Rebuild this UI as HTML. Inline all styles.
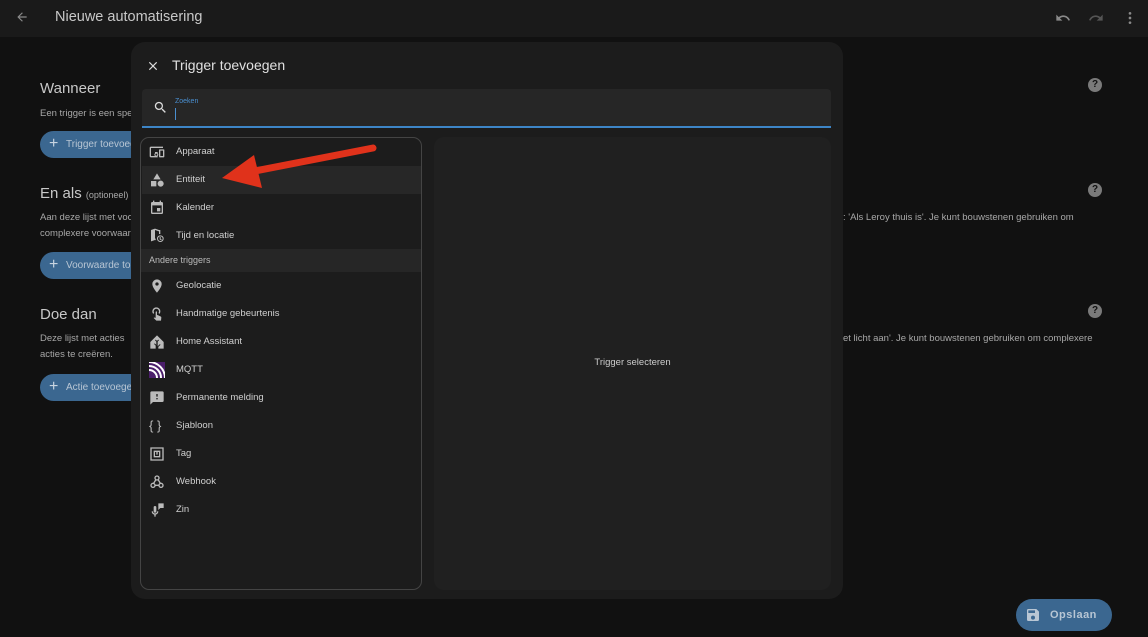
<!DOCTYPE html>
<html><head><meta charset="utf-8"><style>
*{box-sizing:border-box;margin:0;padding:0}
body{width:1148px;height:637px;background:#111;font-family:"Liberation Sans",sans-serif;color:#ddd;position:relative;overflow:hidden}
.a{position:absolute;white-space:nowrap}
.hdr{position:absolute;left:0;top:0;width:1148px;height:37px;background:#1a1a1a}
h2{position:absolute;font-weight:normal;font-size:15px;color:#c8c8c8;white-space:nowrap}
.p{position:absolute;font-size:9.5px;color:#a8a8a8;line-height:16px;white-space:nowrap}
.btn{position:absolute;left:40px;height:27px;width:120px;border-radius:14px;background:#3b6790;color:#b8c6d4;font-size:10px;line-height:27px;padding-left:26px;white-space:nowrap;overflow:hidden}
.btn:before{content:"+";position:absolute;left:9px;top:-1px;font-size:16px;color:#c8d4e0}
.q{position:absolute;left:1088px;width:14px;height:14px;border-radius:50%;background:#7a7a7a;color:#111;font-size:10px;font-weight:bold;text-align:center;line-height:14px}
.dlg{position:absolute;left:131px;top:42px;width:712px;height:557px;background:#1c1c1c;border-radius:14px}
.it{position:absolute;left:1px;width:279px;height:28px;font-size:9.5px;color:#d0d0d0;line-height:28px;padding-left:34px}
.ic{position:absolute;left:7px;top:6px;width:16px;height:16px}
</style></head><body>
<div class="hdr"></div>
<svg class="a" style="left:15px;top:10px" width="14" height="14" viewBox="0 0 24 24"><path d="M20 11H7.8l5.6-5.6L12 4l-8 8 8 8 1.4-1.4L7.8 13H20z" fill="#8a8a8a"/></svg>
<div class="a" style="left:55px;top:9px;font-size:14.5px;color:#c8c8c8">Nieuwe automatisering</div>
<svg class="a" style="left:1055px;top:10px" width="16" height="16" viewBox="0 0 24 24"><path d="M12.5 8c-2.6 0-5 1-6.9 2.6L2 7v9h9l-3.6-3.6c1.4-1.2 3.2-1.9 5.1-1.9 3.5 0 6.5 2.3 7.6 5.5l2.4-.8C21 11 17.1 8 12.5 8z" fill="#8a8a8a"/></svg>
<svg class="a" style="left:1088px;top:10px" width="16" height="16" viewBox="0 0 24 24"><path d="M18.4 10.6C16.6 9 14.1 8 11.5 8 6.9 8 3 11 1.6 15.2l2.4.8C5 12.8 8 10.5 11.5 10.5c1.9 0 3.7.7 5.1 1.9L13 16h9V7z" fill="#555"/></svg>
<svg class="a" style="left:1122px;top:10px" width="16" height="16" viewBox="0 0 24 24"><circle cx="12" cy="5" r="2" fill="#8a8a8a"/><circle cx="12" cy="12" r="2" fill="#8a8a8a"/><circle cx="12" cy="19" r="2" fill="#8a8a8a"/></svg>

<h2 style="left:40px;top:80px">Wanneer</h2>
<div class="p" style="left:40px;top:106px">Een trigger is een spe</div>
<div class="btn" style="top:131px">Trigger toevoegen</div>
<h2 style="left:40px;top:185px">En als <span style="font-size:9px;color:#aaa">(optioneel)</span></h2>
<div class="p" style="left:40px;top:210px">Aan deze lijst met voorwaarden<br>complexere voorwaarden</div>
<div class="p" style="left:843px;top:210px">: 'Als Leroy thuis is'. Je kunt bouwstenen gebruiken om</div>
<div class="btn" style="top:252px">Voorwaarde toevoegen</div>
<h2 style="left:40px;top:306px">Doe dan</h2>
<div class="p" style="left:40px;top:331px">Deze lijst met acties<br>acties te creëren.</div>
<div class="p" style="left:843px;top:331px">et licht aan'. Je kunt bouwstenen gebruiken om complexere</div>
<div class="btn" style="top:374px">Actie toevoegen</div>
<div class="q" style="top:78px">?</div><div class="q" style="top:183px">?</div><div class="q" style="top:304px">?</div>

<div class="a" style="left:1016px;top:599px;width:96px;height:32px;border-radius:16px;background:#3b6790;color:#b8c6d4;font-size:11px;font-weight:bold;line-height:32px;padding-left:34px;letter-spacing:.5px">Opslaan</div>
<svg class="a" style="left:1025px;top:607px" width="16" height="16" viewBox="0 0 24 24"><path d="M17 3H5a2 2 0 0 0-2 2v14a2 2 0 0 0 2 2h14a2 2 0 0 0 2-2V7zm-5 16a3 3 0 1 1 0-6 3 3 0 0 1 0 6zm3-10H5V5h10z" fill="#b8c6d4"/></svg>

<div class="dlg">
 <svg class="a" style="left:15px;top:17px" width="14" height="14" viewBox="0 0 24 24"><path d="M19 6.4 17.6 5 12 10.6 6.4 5 5 6.4 10.6 12 5 17.6 6.4 19 12 13.4 17.6 19 19 17.6 13.4 12z" fill="#ddd"/></svg>
 <div class="a" style="left:41px;top:15px;font-size:14px;color:#e0e0e0">Trigger toevoegen</div>
 <div class="a" style="left:11px;top:47px;width:689px;height:39px;background:#262626;border-radius:4px 4px 0 0;border-bottom:2px solid #3d85c6"></div>
 <svg class="a" style="left:22px;top:58px" width="15" height="15" viewBox="0 0 24 24"><path d="M15.5 14h-.8l-.3-.3A6.5 6.5 0 1 0 9.5 16a6.5 6.5 0 0 0 4.2-1.6l.3.3v.8l5 5 1.5-1.5zm-6 0a4.5 4.5 0 1 1 0-9 4.5 4.5 0 0 1 0 9z" fill="#ddd"/></svg>
 <div class="a" style="left:44px;top:56px;font-size:7px;color:#4a8fd0">Zoeken</div>
 <div class="a" style="left:44px;top:66px;width:1px;height:12px;background:#4a8fd0"></div>
 <div class="a" style="left:303px;top:95px;width:397px;height:453px;background:#202020;border-radius:10px"></div>
 <div class="a" style="left:303px;top:315px;width:397px;text-align:center;font-size:9.5px;color:#ccc">Trigger selecteren</div>
 <div class="a" style="left:9px;top:95px;width:282px;height:453px;border:1px solid #444;border-radius:9px;overflow:hidden">
  <div class="it" style="top:0"><svg class="ic" viewBox="0 0 24 24"><path d="M3 6h18V4H3a2 2 0 0 0-2 2v12a2 2 0 0 0 2 2h6v-2H3zm10 6H9v1.8a3 3 0 0 0 0 4.4V20h4v-1.8a3 3 0 0 0 0-4.4zm-2 5.5a1.5 1.5 0 1 1 0-3 1.5 1.5 0 0 1 0 3zM22 8h-6a1 1 0 0 0-1 1v10a1 1 0 0 0 1 1h6a1 1 0 0 0 1-1V9a1 1 0 0 0-1-1zm-1 10h-4v-8h4z" fill="#bbb"/></svg>Apparaat</div>
  <div class="it" style="top:28px;background:#272727"><svg class="ic" viewBox="0 0 24 24"><path d="M11 13.5v8H3v-8zM12 2l5.5 9h-11zm5.5 11c2.5 0 4.5 2 4.5 4.5S20 22 17.5 22 13 20 13 17.5s2-4.5 4.5-4.5z" fill="#bbb"/></svg>Entiteit</div>
  <div class="it" style="top:56px"><svg class="ic" viewBox="0 0 24 24"><path d="M19 19H5V8h14m-3-7v2H8V1H6v2H5a2 2 0 0 0-2 2v14a2 2 0 0 0 2 2h14a2 2 0 0 0 2-2V5a2 2 0 0 0-2-2h-1V1m-1 11h-5v5h5z" fill="#bbb"/></svg>Kalender</div>
  <div class="it" style="top:84px"><svg class="ic" viewBox="0 0 24 24"><path d="M15 3 9 1 3 3v17l6-2 1 .3V16l-1-.3V3l6 2v4h2V3zm2 8a5 5 0 1 0 0 10 5 5 0 0 0 0-10zm0 8.5a3.5 3.5 0 1 1 0-7 3.5 3.5 0 0 1 0 7zm.5-6H16V17l2.5 1.5.7-1.1-1.7-1z" fill="#bbb"/></svg>Tijd en locatie</div>
  <div class="a" style="left:0;top:111px;width:281px;height:23px;background:#262626;font-size:9px;color:#bbb;line-height:23px;padding-left:8px">Andere triggers</div>
  <div class="it" style="top:134px"><svg class="ic" viewBox="0 0 24 24"><path d="M12 11.5A2.5 2.5 0 1 1 12 6.5a2.5 2.5 0 0 1 0 5M12 2a7 7 0 0 0-7 7c0 5.3 7 13 7 13s7-7.7 7-13a7 7 0 0 0-7-7z" fill="#bbb"/></svg>Geolocatie</div>
  <div class="it" style="top:162px"><svg class="ic" viewBox="0 0 24 24"><path d="M10 9a1 1 0 0 1 2 0v4.5l1.2.1 4.3 2.1c.6.3 1 .9 1 1.6v.1L18 22h-7l-4-4 .7-.7 2.3.6V9zm1-7a6 6 0 0 1 6 6c0 1.5-.5 2.8-1.4 3.9l-1.4-1.4A4 4 0 1 0 7 8c0 .9.3 1.7.8 2.4L6.4 11.8A6 6 0 0 1 11 2z" fill="#bbb"/></svg>Handmatige gebeurtenis</div>
  <div class="it" style="top:190px"><svg class="ic" viewBox="0 0 24 24"><path d="M12 2 2 12v10h8v-4.6L7.6 15l1-1L11 16.4v-5l-2-2 1-1 2 2 2-2 1 1-2 2v7l3.3-3.3 1 1L14 19.4V22h8V12z" fill="#bbb"/></svg>Home Assistant</div>
  <div class="it" style="top:218px"><svg class="ic" viewBox="0 0 24 24"><rect width="24" height="24" fill="#4b1e6b"/><path d="M0 6a18 18 0 0 1 18 18M0 12a12 12 0 0 1 12 12M0 0a24 24 0 0 1 24 24" stroke="#fff" stroke-width="3" fill="none"/></svg>MQTT</div>
  <div class="it" style="top:246px"><svg class="ic" viewBox="0 0 24 24"><path d="M20 2H4a2 2 0 0 0-2 2v18l4-4h14a2 2 0 0 0 2-2V4a2 2 0 0 0-2-2zm-7 12h-2v-2h2zm0-4h-2V6h2z" fill="#bbb"/></svg>Permanente melding</div>
  <div class="it" style="top:274px"><span class="ic" style="font-size:13px;line-height:16px;color:#bbb;left:7px">{ }</span>Sjabloon</div>
  <div class="it" style="top:302px"><svg class="ic" viewBox="0 0 24 24"><path d="M3 3h18v18H3zm5 5h8v8H8zm4 0v5" fill="none" stroke="#bbb" stroke-width="2"/></svg>Tag</div>
  <div class="it" style="top:330px"><svg class="ic" viewBox="0 0 24 24"><circle cx="12" cy="6" r="3" fill="none" stroke="#bbb" stroke-width="2"/><circle cx="6" cy="17" r="3" fill="none" stroke="#bbb" stroke-width="2"/><circle cx="18" cy="17" r="3" fill="none" stroke="#bbb" stroke-width="2"/><path d="M10 9 7 14M14 9l3 5M9 17h6" stroke="#bbb" stroke-width="2"/></svg>Webhook</div>
  <div class="it" style="top:358px"><svg class="ic" viewBox="0 0 24 24"><path d="M9 6a2 2 0 0 1 2 2v6a2 2 0 0 1-4 0V8a2 2 0 0 1 2-2zm5 8c0 2.6-2 4.6-4 4.9V22H8v-3.1C6 18.6 4 16.6 4 14h2a3 3 0 0 0 6 0zM14 2h8v7h-5l-3 3z" fill="#bbb"/></svg>Zin</div>
 </div>
</div>
<svg class="a" style="left:0;top:0" width="1148" height="637"><path d="M373 148 L250 172" stroke="#e0321b" stroke-width="7" stroke-linecap="round"/><polygon points="222,178 254,155 262,188" fill="#e0321b"/></svg>
</body></html>
